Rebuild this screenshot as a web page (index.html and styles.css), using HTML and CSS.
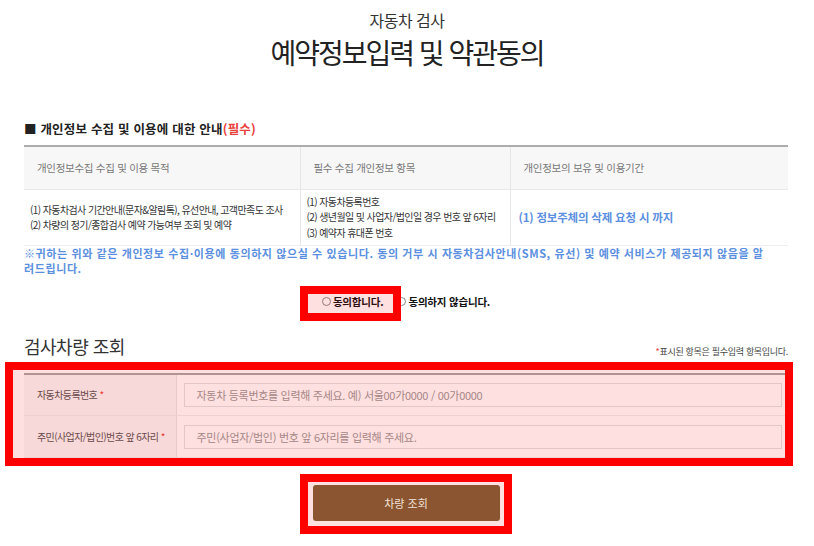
FILE: index.html
```html
<!DOCTYPE html>
<html lang="ko">
<head>
<meta charset="utf-8">
<title>예약정보입력 및 약관동의</title>
<link rel="stylesheet" href="styles.css">
</head>
<body>
<div class="page">
  <header class="titles">
    <p class="sub">자동차 검사</p>
    <h1>예약정보입력 및 약관동의</h1>
  </header>

  <main class="content">
    <section class="privacy">
      <h2 class="sec-title">■ 개인정보 수집 및 이용에 대한 안내<span class="req">(필수)</span></h2>
      <table class="terms">
        <colgroup>
          <col class="c1"><col class="c2"><col class="c3">
        </colgroup>
        <thead>
          <tr>
            <th>개인정보수집 수집 및 이용 목적</th>
            <th>필수 수집 개인정보 항목</th>
            <th>개인정보의 보유 및 이용기간</th>
          </tr>
        </thead>
        <tbody>
          <tr>
            <td>
              <p class="line">(1) 자동차검사 기간안내(문자&amp;알림톡), 유선안내, 고객만족도 조사</p>
              <p class="line">(2) 차량의 정기/종합검사 예약 가능여부 조회 및 예약</p>
            </td>
            <td>
              <p class="line">(1) 자동차등록번호</p>
              <p class="line">(2) 생년월일 및 사업자/법인일 경우 번호 앞 6자리</p>
              <p class="line">(3) 예약자 휴대폰 번호</p>
            </td>
            <td class="period">(1) 정보주체의 삭제 요청 시 까지</td>
          </tr>
        </tbody>
      </table>
      <p class="notice"><span class="nl">※귀하는 위와 같은 개인정보 수집·이용에 동의하지 않으실 수 있습니다. 동의 거부 시 자동차검사안내(SMS, 유선) 및 예약 서비스가 제공되지 않음을 알</span><span class="nl">려드립니다.</span></p>
      <div class="agree">
        <label class="opt opt-yes"><span class="radio"></span>동의합니다.</label>
        <label class="opt opt-no"><span class="radio"></span>동의하지 않습니다.</label>
      </div>
    </section>

    <section class="lookup">
      <div class="lookup-head">
        <h2 class="lookup-title">검사차량 조회</h2>
        <p class="hint"><span class="req">*</span>표시된 항목은 필수입력 항목입니다.</p>
      </div>
      <table class="form">
        <colgroup>
          <col class="fl"><col class="fi">
        </colgroup>
        <tbody>
          <tr>
            <th>자동차등록번호 <span class="req">*</span></th>
            <td><input class="field" type="text" placeholder="자동차 등록번호를 입력해 주세요. 예) 서울00가0000 / 00가0000"></td>
          </tr>
          <tr>
            <th>주민(사업자/법인)번호 앞 6자리 <span class="req">*</span></th>
            <td><input class="field" type="text" placeholder="주민(사업자/법인) 번호 앞 6자리를 입력해 주세요."></td>
          </tr>
        </tbody>
      </table>
      <div class="btns">
        <button class="btn-search" type="button">차량 조회</button>
      </div>
    </section>
  </main>

  <div class="mark mark-agree"></div>
  <div class="mark mark-form"></div>
  <div class="mark mark-btn"></div>
</div>
</body>
</html>
```

FILE: styles.css
```css
* { box-sizing: border-box; }

body {
  margin: 0;
  background: #fff;
  color: #333;
  font-family: "Noto Sans CJK KR", "Noto Sans", sans-serif;
}

.page {
  position: relative;
  width: 814px;
  height: 546px;
  overflow: hidden;
}

.titles {
  text-align: center;
  padding-top: 8px;
}

.sub {
  margin: 0;
  font-size: 16px;
  line-height: 24px;
  color: #333;
  letter-spacing: -0.5px;
}

.titles h1 {
  margin: 2px 0 0;
  font-size: 28px;
  line-height: 36px;
  font-weight: 400;
  letter-spacing: -2px;
  color: #222;
}

.content {
  margin: 0 26px 0 24px;
}

.sec-title {
  margin: 50px 0 7px;
  font-size: 12.5px;
  line-height: 18px;
  font-weight: 700;
  color: #222;
  letter-spacing: 0.2px;
}

.req { color: #e8413c; }

.terms {
  width: 100%;
  border-collapse: collapse;
  table-layout: fixed;
  border-top: 2px solid #adadad;
}

.terms .c1 { width: 276px; }
.terms .c2 { width: 210px; }
.terms .c3 { width: 278px; }

.terms th {
  height: 43px;
  padding: 0 13px;
  background: #f7f7f7;
  font-size: 10.5px;
  font-weight: 400;
  color: #777;
  text-align: left;
  border-left: 1px solid #e6e6e6;
  border-bottom: 1px solid #e9e9e9;
  letter-spacing: -0.3px;
}

.terms td {
  height: 56px;
  padding: 0 6px;
  font-size: 10px;
  color: #333;
  border-left: 1px solid #e6e6e6;
  border-bottom: 1px solid #eee;
  vertical-align: middle;
  letter-spacing: -0.6px;
}

.terms th:first-child,
.terms td:first-child { border-left: 0; }

.line {
  margin: 0;
  line-height: 15.5px;
  white-space: nowrap;
}

.terms td.period {
  padding-left: 8px;
  font-size: 11.5px;
  font-weight: 700;
  color: #5b8fe0;
  letter-spacing: -0.2px;
}

.notice {
  margin: 0;
  font-size: 11px;
  line-height: 15px;
  font-weight: 700;
  color: #5b8fe0;
  letter-spacing: 0.6px;
}

.nl {
  display: block;
  white-space: nowrap;
}

.agree {
  display: flex;
  justify-content: center;
  align-items: center;
  gap: 14px;
  margin-top: 16px;
  height: 20px;
}

.opt {
  display: flex;
  align-items: center;
  font-size: 10.5px;
  font-weight: 700;
  color: #111;
  letter-spacing: -0.2px;
}

.radio {
  display: inline-block;
  width: 9px;
  height: 9px;
  margin-right: 2px;
  border: 1px solid #8a8a8a;
  border-radius: 50%;
  background: #fff;
}

.lookup-head {
  display: flex;
  justify-content: space-between;
  align-items: flex-end;
  margin-top: 22px;
}

.lookup-title {
  margin: 0;
  font-size: 18px;
  line-height: 24px;
  font-weight: 400;
  color: #333;
  letter-spacing: -0.5px;
}

.hint {
  margin: 0;
  font-size: 9px;
  line-height: 12px;
  color: #444;
  letter-spacing: -0.3px;
}

.form {
  width: 100%;
  margin-top: 15px;
  border-collapse: collapse;
  table-layout: fixed;
  border-top: 2px solid #a8a8a8;
}

.form .fl { width: 152px; }

.form th {
  height: 42px;
  padding: 0 13px;
  background: #f7f7f7;
  font-size: 10px;
  font-weight: 400;
  color: #555;
  text-align: left;
  border-right: 1px solid #e6e6e6;
  border-bottom: 1px solid #eee;
  white-space: nowrap;
  letter-spacing: -0.6px;
}

.form td {
  height: 42px;
  padding: 0 6px 0 7px;
  border-bottom: 1px solid #eee;
}

.field {
  display: block;
  width: 100%;
  height: 24px;
  padding: 0 12px;
  border: 1px solid #e2e2e2;
  background: #fff;
  font-family: "Noto Sans CJK KR", "Noto Sans", sans-serif;
  font-size: 11px;
  letter-spacing: -0.3px;
  color: #333;
  outline: none;
}

.field::placeholder { color: #999; }

.btns {
  display: flex;
  justify-content: center;
  margin-top: 27px;
}

.btn-search {
  position: relative;
  z-index: 2;
  width: 187px;
  height: 36px;
  border: 0;
  border-radius: 3px;
  background: #8a5530;
  color: #f3e2d8;
  font-family: "Noto Sans CJK KR", "Noto Sans", sans-serif;
  font-size: 11px;
  cursor: pointer;
}

/* red highlight overlays */
.mark {
  position: absolute;
  z-index: 1;
  border: 8px solid #ff0000;
  background: rgba(255, 0, 0, 0.12);
  pointer-events: none;
}

.mark-agree { left: 300px; top: 286px; width: 101px; height: 35px; }
.mark-form  { left: 5px;   top: 362px; width: 788px; height: 104px; }
.mark-btn   { left: 300px; top: 474px; width: 212px; height: 60px; }
```
